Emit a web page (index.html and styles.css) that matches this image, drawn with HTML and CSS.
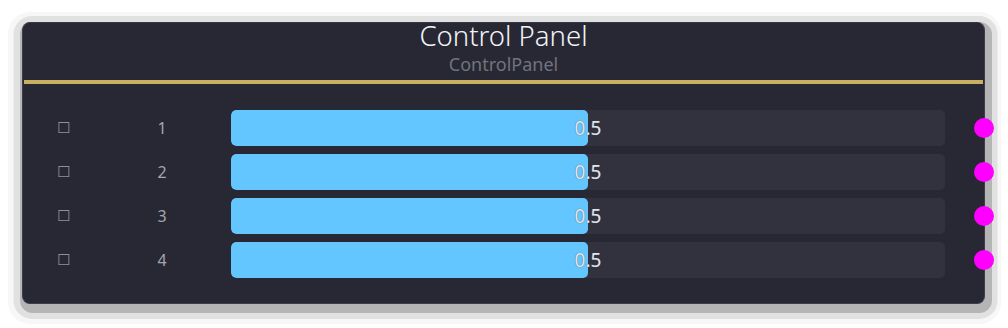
FILE: index.html
```html
<!DOCTYPE html>
<html>
<head>
<meta charset="utf-8">
<link rel="stylesheet" href="styles.css">
</head>
<body>
<div class="panel">
  <div class="header">
    <div class="title">Control Panel</div>
    <div class="subtitle">ControlPanel</div>
  </div>
  <div class="divider"></div>
  <div class="rows">
    <div class="row">
      <div class="check">☐</div>
      <div class="num">1</div>
      <div class="bar"><div class="fill" style="width:50%"></div><span class="val">0.5</span></div>
      <div class="dot"></div>
    </div>
    <div class="row">
      <div class="check">☐</div>
      <div class="num">2</div>
      <div class="bar"><div class="fill" style="width:50%"></div><span class="val">0.5</span></div>
      <div class="dot"></div>
    </div>
    <div class="row">
      <div class="check">☐</div>
      <div class="num">3</div>
      <div class="bar"><div class="fill" style="width:50%"></div><span class="val">0.5</span></div>
      <div class="dot"></div>
    </div>
    <div class="row">
      <div class="check">☐</div>
      <div class="num">4</div>
      <div class="bar"><div class="fill" style="width:50%"></div><span class="val">0.5</span></div>
      <div class="dot"></div>
    </div>
  </div>
</div>
</body>
</html>
```
FILE: styles.css
```css
html, body {
  margin: 0;
  padding: 0;
  background: #ffffff;
}
body {
  padding: 22px 0 24px 22px;
  font-family: "Noto Sans", "Open Sans", sans-serif;
}
.panel {
  width: 963px;
  height: 282px;
  box-sizing: border-box;
  background: #272833;
  border-radius: 8px;
  border: 1px solid #3c3e4c;
  border-top-color: #353744;
  box-shadow:
    2.5px 4.5px 0 4.5px #b5b5b5,
    2px 4.5px 0 10.5px #e1e1e1,
    1px 5px 0 15px #f7f7f7;
}
.header {
  display: flex;
  flex-direction: column;
  align-items: center;
  height: 57px;
}
.title {
  margin-top: -1px;
  color: #f2f3f7;
  font-size: 27.5px;
  font-weight: 300;
  line-height: 28px;
}
.subtitle {
  margin-top: 5px;
  color: #71737f;
  font-size: 18px;
  line-height: 18px;
}
.divider {
  height: 4px;
  margin: 0 1px;
  background: #c8b062;
}
.rows {
  display: flex;
  flex-direction: column;
  gap: 8px;
  padding-top: 26px;
}
.row {
  position: relative;
  display: grid;
  grid-template-columns: 82px 114px 726px;
  align-items: center;
  height: 36px;
}
.check {
  text-align: center;
  color: #8e8f9c;
  font-family: "DejaVu Sans", sans-serif;
  font-size: 15px;
}
.num {
  text-align: center;
  color: #a3a5b1;
  font-size: 16px;
}
.bar {
  position: relative;
  margin-left: 12px;
  height: 36px;
  background: #31323e;
  border-radius: 5px;
  overflow: hidden;
}
.fill {
  height: 100%;
  background: #63c6ff;
  border-radius: 5px;
}
.val {
  position: absolute;
  left: 0;
  right: 0;
  top: 0;
  line-height: 36px;
  text-align: center;
  color: #dfe3ee;
  font-size: 19px;
  text-shadow: 0 0 1px #555;
}
.dot {
  position: absolute;
  right: -10px;
  top: 8px;
  width: 20px;
  height: 20px;
  border-radius: 50%;
  background: #ff00ff;
}
```
